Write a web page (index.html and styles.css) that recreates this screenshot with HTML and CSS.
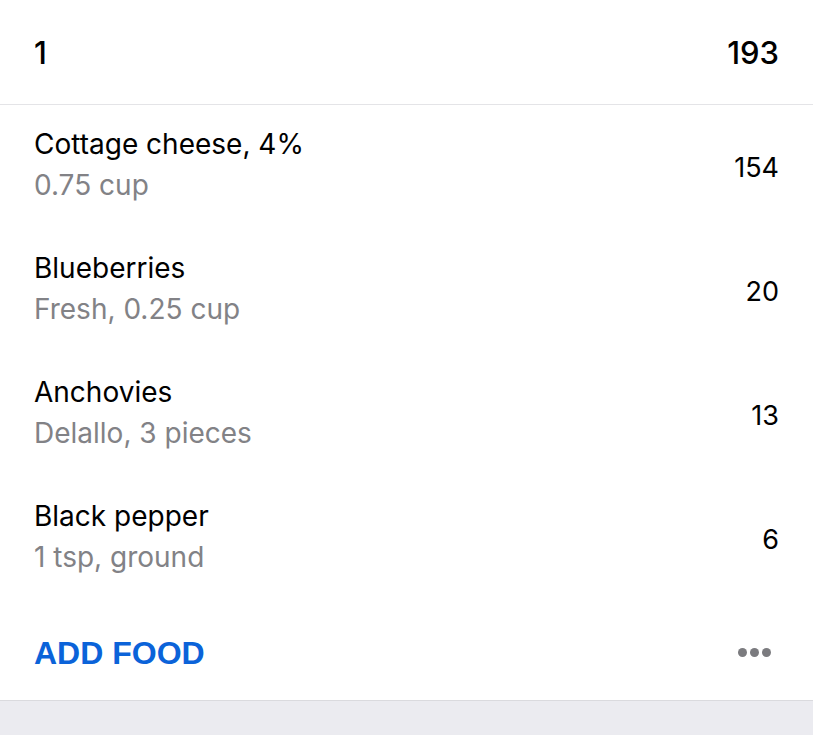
FILE: index.html
```html
<!DOCTYPE html>
<html lang="en">
<head>
    <meta charset="UTF-8">
    <meta name="viewport" content="width=device-width, initial-scale=1.0">
    <title>Meal 1</title>
    <link rel="stylesheet" href="styles.css">
</head>
<body>
    <div class="meal">
        <!-- Meal header -->
        <div class="meal-header">
            <span class="meal-name">1</span>
            <span class="meal-total">193</span>
        </div>

        <!-- Food entries -->
        <div class="food-list">
            <div class="food">
                <div class="food-info">
                    <div class="food-name">Cottage cheese, 4%</div>
                    <div class="food-detail">0.75 cup</div>
                </div>
                <div class="food-cal">154</div>
            </div>
            <div class="food">
                <div class="food-info">
                    <div class="food-name">Blueberries</div>
                    <div class="food-detail">Fresh, 0.25 cup</div>
                </div>
                <div class="food-cal">20</div>
            </div>
            <div class="food">
                <div class="food-info">
                    <div class="food-name">Anchovies</div>
                    <div class="food-detail">Delallo, 3 pieces</div>
                </div>
                <div class="food-cal">13</div>
            </div>
            <div class="food">
                <div class="food-info">
                    <div class="food-name">Black pepper</div>
                    <div class="food-detail">1 tsp, ground</div>
                </div>
                <div class="food-cal">6</div>
            </div>
        </div>

        <!-- Footer -->
        <div class="meal-footer">
            <span class="add-food">ADD FOOD</span>
            <span class="more">
                <i></i><i></i><i></i>
            </span>
        </div>
    </div>
    <div class="spacer"></div>
</body>
</html>
```

FILE: styles.css
```css
/* General Styles */
body {
    font-family: 'Inter', 'Liberation Sans', sans-serif;
    margin: 0;
    padding: 0;
    background: #fff;
    color: #000;
}

.meal-header {
    height: 104px;
    padding: 0 34px;
    display: flex;
    justify-content: space-between;
    align-items: center;
    border-bottom: 1px solid #e4e4e7;
    font-size: 31px;
    font-weight: 500;
}

.food {
    height: 124px;
    padding: 0 34px;
    display: flex;
    justify-content: space-between;
    align-items: center;
}

.food-info {
    margin-top: -4px;
}

.food-name {
    font-size: 28px;
    line-height: 41px;
}

.food-detail {
    font-size: 28px;
    line-height: 41px;
    color: #828286;
}

.food-cal {
    font-size: 27px;
}

.meal-footer {
    height: 99px;
    padding: 0 34px;
    display: flex;
    justify-content: space-between;
    align-items: center;
    border-bottom: 1px solid #dadade;
}

.add-food {
    font-family: 'Liberation Sans', sans-serif;
    font-size: 32px;
    font-weight: bold;
    color: #0b63d9;
    margin-top: 6px;
}

.more {
    display: flex;
    gap: 3px;
    margin-right: 8px;
    margin-top: 4px;
}

.more i {
    width: 9px;
    height: 9px;
    border-radius: 50%;
    background: #7b7b7f;
}

.spacer {
    height: 34px;
    background: #ebebf0;
}
```
